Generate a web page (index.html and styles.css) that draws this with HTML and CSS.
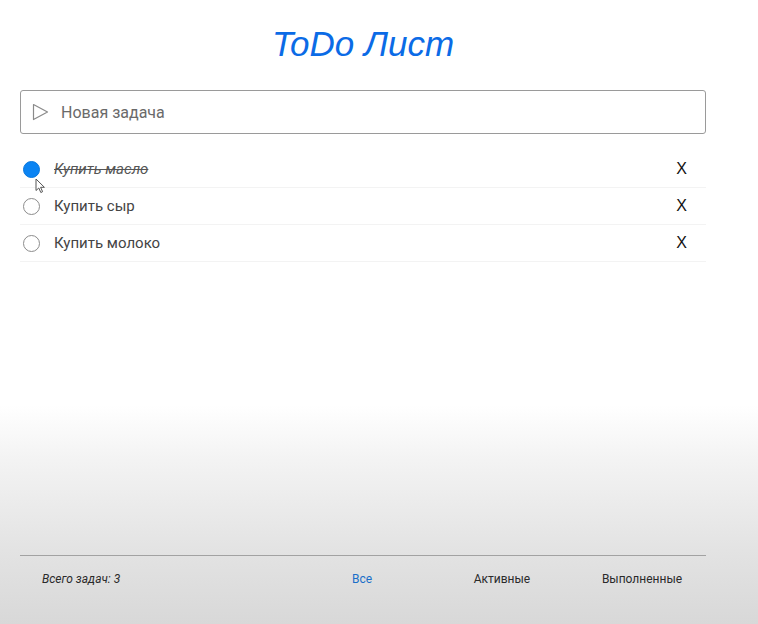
FILE: index.html
```html
<!DOCTYPE html>
<html lang="ru">
<head>
<meta charset="utf-8">
<title>ToDo Лист</title>
<link rel="stylesheet" href="styles.css">
</head>
<body>
<div class="app">
  <main class="main">
    <h1 class="title">ToDo Лист</h1>
    <div class="new-task">
      <svg class="play" width="17" height="18" viewBox="0 0 17 18"><polygon points="1.5,1.5 15.5,9 1.5,16.5" fill="none" stroke="#8a8a8a" stroke-width="1.2" stroke-linejoin="round"/></svg>
      <span class="placeholder">Новая задача</span>
    </div>
    <ul class="list">
      <li class="item done">
        <span class="check checked"></span>
        <span class="text">Купить масло</span>
        <span class="remove">X</span>
        <svg class="cursor" width="12" height="16" viewBox="0 0 12 16"><path d="M1 1 L1 12.5 L3.8 10 L5.8 14.5 L7.6 13.7 L5.6 9.3 L9.4 9.3 Z" fill="#fff" stroke="#555" stroke-width="1" stroke-linejoin="round"/></svg>
      </li>
      <li class="item">
        <span class="check"></span>
        <span class="text">Купить сыр</span>
        <span class="remove">X</span>
      </li>
      <li class="item">
        <span class="check"></span>
        <span class="text">Купить молоко</span>
        <span class="remove">X</span>
      </li>
    </ul>
  </main>
  <footer class="footer">
    <span class="count">Всего задач: 3</span>
    <nav class="filters">
      <span class="filter active">Все</span>
      <span class="filter">Активные</span>
      <span class="filter">Выполненные</span>
    </nav>
  </footer>
</div>
</body>
</html>
```

FILE: styles.css
```css
html, body {
  margin: 0;
  padding: 0;
  height: 100%;
}
body {
  font-family: Roboto, "Noto Sans", sans-serif;
  background: linear-gradient(to bottom, #ffffff 0, #ffffff 405px, #f3f3f3 460px, #e3e3e3 550px, #d8d8d8 624px);
  color: #333;
}
.app {
  box-sizing: border-box;
  min-height: 100vh;
  width: 686px;
  margin-left: 20px;
  display: flex;
  flex-direction: column;
}
.main {
  flex: 1;
}
.title {
  margin: 0;
  padding-top: 24px;
  height: 90px;
  box-sizing: border-box;
  font-family: "Liberation Sans", Arial, sans-serif;
  font-style: italic;
  font-weight: normal;
  font-size: 35px;
  line-height: 40px;
  color: #0b6be6;
  text-align: center;
}
.new-task {
  box-sizing: border-box;
  height: 44px;
  border: 1px solid #9a9a9a;
  border-radius: 3px;
  display: flex;
  align-items: center;
  padding-left: 11px;
  gap: 12px;
  margin-bottom: 17px;
}
.play {
  display: block;
}
.placeholder {
  font-size: 16px;
  color: #6a6a6a;
}
.list {
  list-style: none;
  margin: 0;
  padding: 0;
}
.item {
  position: relative;
  height: 37px;
  box-sizing: border-box;
  border-bottom: 1px solid #f3f3f3;
  display: flex;
  align-items: center;
  padding-left: 3px;
  font-size: 15px;
  color: #444;
}
.check {
  box-sizing: border-box;
  width: 17px;
  height: 17px;
  border-radius: 50%;
  border: 1px solid #8c8c8c;
  background: #fff;
  flex: none;
}
.check.checked {
  background: #0b84f3;
  border-color: #0a78dd;
}
.text {
  margin-left: 14px;
  flex: 1;
}
.done .text {
  font-style: italic;
  text-decoration: line-through;
  color: #555;
}
.remove {
  font-family: "Liberation Sans", Arial, sans-serif;
  font-size: 16px;
  color: #111;
  margin-right: 19px;
}
.cursor {
  position: absolute;
  left: 15px;
  top: 27px;
}
.footer {
  border-top: 1.5px solid #a2a2a2;
  height: 69px;
  box-sizing: border-box;
  padding-top: 14px;
  display: flex;
  align-items: flex-start;
  font-size: 12px;
  line-height: 18px;
  color: #2a2a2a;
}
.count {
  flex: 1;
  padding-left: 22px;
  font-style: italic;
}
.filters {
  display: flex;
  gap: 12px;
}
.filter {
  width: 128px;
  text-align: center;
}
.filter.active {
  color: #1a6fc9;
}
```
